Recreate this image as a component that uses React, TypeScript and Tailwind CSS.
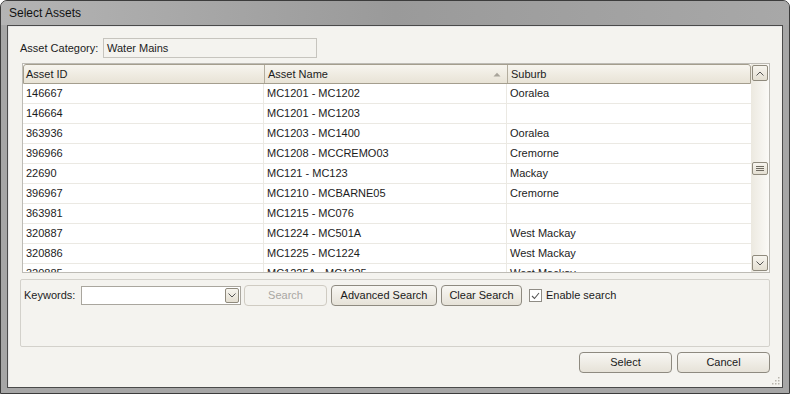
import React from "react";

const rows: [string, string, string][] = [
  ["146667", "MC1201 - MC1202", "Ooralea"],
  ["146664", "MC1201 - MC1203", ""],
  ["363936", "MC1203 - MC1400", "Ooralea"],
  ["396966", "MC1208 - MCCREMO03", "Cremorne"],
  ["22690", "MC121 - MC123", "Mackay"],
  ["396967", "MC1210 - MCBARNE05", "Cremorne"],
  ["363981", "MC1215 - MC076", ""],
  ["320887", "MC1224 - MC501A", "West Mackay"],
  ["320886", "MC1225 - MC1224", "West Mackay"],
  ["320885", "MC1225A - MC1225", "West Mackay"],
];

function Btn({ children, w, disabled }: { children: React.ReactNode; w: string; disabled?: boolean }) {
  return (
    <div
      className={`${w} h-[21px] flex items-center justify-center rounded-[4px] border ${
        disabled ? "border-[#cfcbc2] text-[#a9a7a2] bg-[#f4f3ef]" : "border-[#8e8a80] text-[#1a1a1a] bg-gradient-to-b from-[#f8f7f3] to-[#e6e2d8]"
      }`}
    >
      {children}
    </div>
  );
}

export default function App() {
  return (
    <div
      className="w-[790px] h-[394px] bg-[#a6a6a6] border border-[#3c3c3c] rounded-t-[7px] flex flex-col text-[11px] text-[#1c1c1c] overflow-hidden"
      style={{ fontFamily: '"Liberation Sans", Arial, sans-serif' }}
    >
      {/* title bar */}
      <div className="h-[24px] shrink-0 flex items-center pl-[8px] bg-gradient-to-r from-[#b4b4b4] via-[#9a9a9a] to-[#a8a8a8] text-[12px] text-[#111]">
        Select Assets
      </div>
      <div className="flex-1 flex flex-col mx-[6px] mb-[5px] border border-[#4a4a4a]">
        <div className="flex-1 flex flex-col bg-[#f4f3ef] border-t border-l border-[#e8e8e8] pl-[11px] pr-[12px] pt-[11px] relative">
          {/* asset category */}
          <div className="flex items-center h-[20px]">
            <span className="w-[83px]">Asset Category:</span>
            <div className="w-[214px] h-[20px] border border-[#c6c4be] bg-[#f4f3ef] flex items-center pl-[3px]">
              Water Mains
            </div>
          </div>
          {/* grid */}
          <div className="ml-[2px] mt-[5px] h-[210px] border border-[#bdbbb5] flex bg-white">
            <div className="flex-1 flex flex-col overflow-hidden">
              <div className="h-[20px] shrink-0 flex bg-gradient-to-b from-[#f7f5ef] to-[#e8e3d6] border border-[#a49e8e] rounded-t-[3px]">
                <div className="w-[241px] border-r border-[#b3ad9e] pl-[2px] flex items-center">Asset ID</div>
                <div className="w-[243px] border-r border-[#b3ad9e] pl-[3px] pr-[6px] flex items-center justify-between">
                  <span>Asset Name</span>
                  <svg width="8" height="5" viewBox="0 0 8 5">
                    <path d="M0.5 4.5 L4 0.8 L7.5 4.5 Z" fill="#a8a49a" />
                  </svg>
                </div>
                <div className="flex-1 pl-[3px] flex items-center">Suburb</div>
              </div>
              <div className="flex-1 overflow-hidden">
                {rows.map((r, i) => (
                  <div key={i} className="h-[20px] flex border-b border-[#ebe9e3]">
                    <div className="w-[241px] pl-[3px] flex items-center border-r border-[#ebe9e3]">{r[0]}</div>
                    <div className="w-[243px] pl-[3px] flex items-center border-r border-[#ebe9e3]">{r[1]}</div>
                    <div className="flex-1 pl-[3px] flex items-center">{r[2]}</div>
                  </div>
                ))}
              </div>
            </div>
            {/* scrollbar */}
            <div className="w-[18px] shrink-0 flex flex-col items-center bg-gradient-to-r from-[#ece9e0] to-[#fbfaf7] pt-[1px] pb-[1px]">
              <div className="w-[16px] h-[16px] border border-[#8f8a7d] rounded-[2px] bg-gradient-to-b from-[#f7f5ef] to-[#e4dfd2] flex items-center justify-center">
                <svg width="8" height="5" viewBox="0 0 8 5">
                  <path d="M0.5 4.5 L4 1 L7.5 4.5" fill="none" stroke="#555" strokeWidth="1" />
                </svg>
              </div>
              <div className="flex-1 flex flex-col justify-center">
                <div className="w-[16px] h-[13px] border border-[#8f8a7d] rounded-[2px] bg-gradient-to-b from-[#f7f5ef] to-[#e4dfd2] flex items-center justify-center">
                  <svg width="8" height="6" viewBox="0 0 8 6">
                    <path d="M0 1.5 H8 M0 3.5 H8 M0 5.5 H8" stroke="#6f6a60" strokeWidth="1" />
                  </svg>
                </div>
              </div>
              <div className="w-[16px] h-[16px] border border-[#8f8a7d] rounded-[2px] bg-gradient-to-b from-[#f7f5ef] to-[#e4dfd2] flex items-center justify-center">
                <svg width="8" height="5" viewBox="0 0 8 5">
                  <path d="M0.5 0.5 L4 4 L7.5 0.5" fill="none" stroke="#555" strokeWidth="1" />
                </svg>
              </div>
            </div>
          </div>
          {/* search panel */}
          <div className="mt-[6px] h-[68px] border border-[#d3d1cb] rounded-[2px] pl-[3px] pt-[5px]">
            <div className="flex items-center h-[21px]">
              <span className="w-[57px]">Keywords:</span>
              <div className="w-[160px] h-[19px] border border-[#a9a69e] bg-white flex justify-end items-center pr-[1px]">
                <div className="w-[14px] h-[15px] border border-[#8f8a7d] rounded-[2px] bg-gradient-to-b from-[#f7f5ef] to-[#e4dfd2] flex items-center justify-center">
                  <svg width="8" height="5" viewBox="0 0 8 5">
                    <path d="M0.5 0.5 L4 4 L7.5 0.5" fill="none" stroke="#555" strokeWidth="1" />
                  </svg>
                </div>
              </div>
              <div className="ml-[3px]"><Btn w="w-[83px]" disabled>Search</Btn></div>
              <div className="ml-[4px]"><Btn w="w-[106px]">Advanced Search</Btn></div>
              <div className="ml-[4px]"><Btn w="w-[81px]">Clear Search</Btn></div>
              <div className="ml-[7px] w-[13px] h-[13px] border border-[#8f8c85] bg-white flex items-center justify-center">
                <svg width="9" height="8" viewBox="0 0 9 8">
                  <path d="M1 4 L3.5 6.5 L8 1" fill="none" stroke="#555" strokeWidth="1.1" />
                </svg>
              </div>
              <span className="ml-[4px]">Enable search</span>
            </div>
          </div>
          {/* bottom buttons */}
          <div className="mt-[5px] flex justify-end gap-[5px]">
            <Btn w="w-[93px]">Select</Btn>
            <Btn w="w-[93px]">Cancel</Btn>
          </div>
          {/* resize grip */}
          <svg className="absolute right-[2px] bottom-[2px]" width="10" height="10" viewBox="0 0 10 10">
            {[
              [8, 2], [8, 5], [5, 5], [8, 8], [5, 8], [2, 8],
            ].map(([x, y], i) => (
              <rect key={i} x={x} y={y} width="1.5" height="1.5" fill="#b9b6ae" />
            ))}
          </svg>
        </div>
      </div>
    </div>
  );
}
